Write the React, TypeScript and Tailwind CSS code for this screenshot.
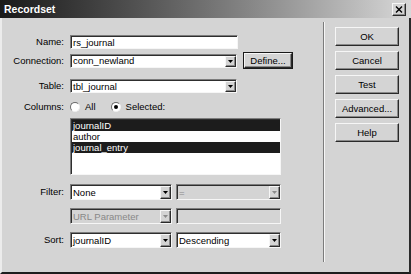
import React from "react";

const sunken =
  "border border-t-[#7c7c7c] border-l-[#7c7c7c] border-r-[#f6f6f6] border-b-[#f6f6f6] shadow-[inset_1px_1px_0_#2e2e2e]";
const raised =
  "border border-t-[#f6f6f6] border-l-[#f6f6f6] border-r-[#2a2a2a] border-b-[#2a2a2a] shadow-[inset_-1px_-1px_0_#8a8a8a]";

function Arrow({ disabled }: { disabled?: boolean }) {
  return (
    <div className={`w-[11px] shrink-0 h-full ${raised} bg-[#d4d4d4] flex items-center justify-center`}>
      <svg width="5" height="3" viewBox="0 0 5 3">
        <path d="M0 0h5L2.5 3z" fill={disabled ? "#8a8a8a" : "#000"} />
      </svg>
    </div>
  );
}

function Select({ cls, text, disabled }: { cls: string; text: string; disabled?: boolean }) {
  return (
    <div
      className={`${cls} ${sunken} ${
        disabled ? "bg-[#d4d4d4] text-[#888888]" : "bg-white text-black"
      } flex items-stretch pt-[1px] pl-[1px]`}
    >
      <div className="flex-1 flex items-center pl-[1px] overflow-hidden whitespace-nowrap">{text}</div>
      <Arrow disabled={disabled} />
    </div>
  );
}

function Label({ children }: { children: React.ReactNode }) {
  return <div className="w-[62px] shrink-0 text-right">{children}</div>;
}

function Button({ children }: { children: React.ReactNode }) {
  return (
    <div className={`w-[64px] h-[19px] ${raised} bg-[#d4d4d4] flex items-center justify-center`}>
      {children}
    </div>
  );
}

function Radio({ checked }: { checked?: boolean }) {
  return (
    <div className="w-[10px] h-[10px] rounded-full border border-t-[#6a6a6a] border-l-[#6a6a6a] border-r-[#f0f0f0] border-b-[#f0f0f0] bg-white flex items-center justify-center">
      {checked && <div className="w-[4px] h-[4px] rounded-full bg-black" />}
    </div>
  );
}

export default function App() {
  return (
    <div className="w-[411px] h-[274px] bg-[#d4d4d4] flex flex-col overflow-hidden font-['Liberation_Sans',Arial,sans-serif] text-[9.5px] text-black leading-none">
      <div className="h-[18px] shrink-0 flex items-center justify-between bg-gradient-to-r from-[#1a1a1a] to-[#d8d8d8] pl-[4px] pr-[5px]">
        <span className="text-white font-bold text-[10.5px]">Recordset</span>
        <div className={`w-[14px] h-[13px] ${raised} bg-[#d4d4d4] flex items-center justify-center`}>
          <svg width="8" height="7" viewBox="0 0 8 7">
            <path d="M1 0.5L7 6.5M7 0.5L1 6.5" stroke="#000" strokeWidth="1.4" />
          </svg>
        </div>
      </div>
      <div className="flex-1 flex border-l-2 border-l-[#ececec] border-r-2 border-r-[#2a2a2a] border-b-2 border-b-[#1e1e1e]">
        <div className="w-[321px] shrink-0 flex flex-col">
          <div className="mt-[17px] h-[14px] flex items-center gap-[6px]">
            <Label>Name:</Label>
            <div className={`w-[168px] h-[14px] ${sunken} bg-white flex items-center pl-[2px] pt-[1px]`}>rs_journal</div>
          </div>
          <div className="mt-[3px] h-[17px] flex items-center gap-[6px]">
            <Label>Connection:</Label>
            <Select cls="w-[167px] h-[14px]" text="conn_newland" />
            <div className="w-[50px] h-[17px] border border-[#1a1a1a] flex">
              <div className={`flex-1 ${raised} bg-[#d4d4d4] flex items-center justify-center`}>Define...</div>
            </div>
          </div>
          <div className="mt-[10px] h-[14px] flex items-center gap-[6px]">
            <Label>Table:</Label>
            <Select cls="w-[167px] h-[14px]" text="tbl_journal" />
          </div>
          <div className="mt-[8px] h-[12px] flex items-center gap-[6px]">
            <Label>Columns:</Label>
            <div className="flex items-center">
              <Radio />
              <span className="ml-[5px]">All</span>
              <div className="ml-[15px]">
                <Radio checked />
              </div>
              <span className="ml-[5px]">Selected:</span>
            </div>
          </div>
          <div className="mt-[5px] ml-[68px] w-[211px] h-[57px] flex">
            <div className={`flex-1 ${sunken} bg-white flex flex-col pt-[1px] pl-[1px]`}>
              <div className="h-[11px] bg-[#1c1c1c] text-white flex items-center pl-[1px]">journalID</div>
              <div className="h-[11px] flex items-center pl-[1px]">author</div>
              <div className="h-[11px] bg-[#1c1c1c] text-white flex items-center pl-[1px]">journal_entry</div>
            </div>
          </div>
          <div className="mt-[9px] h-[16px] flex items-center gap-[6px]">
            <Label>Filter:</Label>
            <div className="flex gap-[4px]">
              <Select cls="w-[102px] h-[16px]" text="None" />
              <Select cls="w-[105px] h-[16px]" text="=" disabled />
            </div>
          </div>
          <div className="mt-[8px] h-[16px] flex items-center gap-[6px]">
            <Label>{""}</Label>
            <div className="flex gap-[4px]">
              <Select cls="w-[102px] h-[16px]" text="URL Parameter" disabled />
              <div className={`w-[105px] h-[16px] ${sunken} bg-[#d4d4d4]`} />
            </div>
          </div>
          <div className="mt-[8px] h-[16px] flex items-center gap-[6px]">
            <Label>Sort:</Label>
            <div className="flex gap-[4px]">
              <Select cls="w-[102px] h-[16px]" text="journalID" />
              <Select cls="w-[105px] h-[16px]" text="Descending" />
            </div>
          </div>
        </div>
        <div className="w-[2px] mt-[4px] mb-[10px] border-l border-l-[#7c7c7c] border-r border-r-[#f6f6f6]" />
        <div className="flex flex-col gap-[5px] pl-[10px] pt-[9px]">
          <Button>OK</Button>
          <Button>Cancel</Button>
          <Button>Test</Button>
          <Button>Advanced...</Button>
          <Button>Help</Button>
        </div>
      </div>
    </div>
  );
}
